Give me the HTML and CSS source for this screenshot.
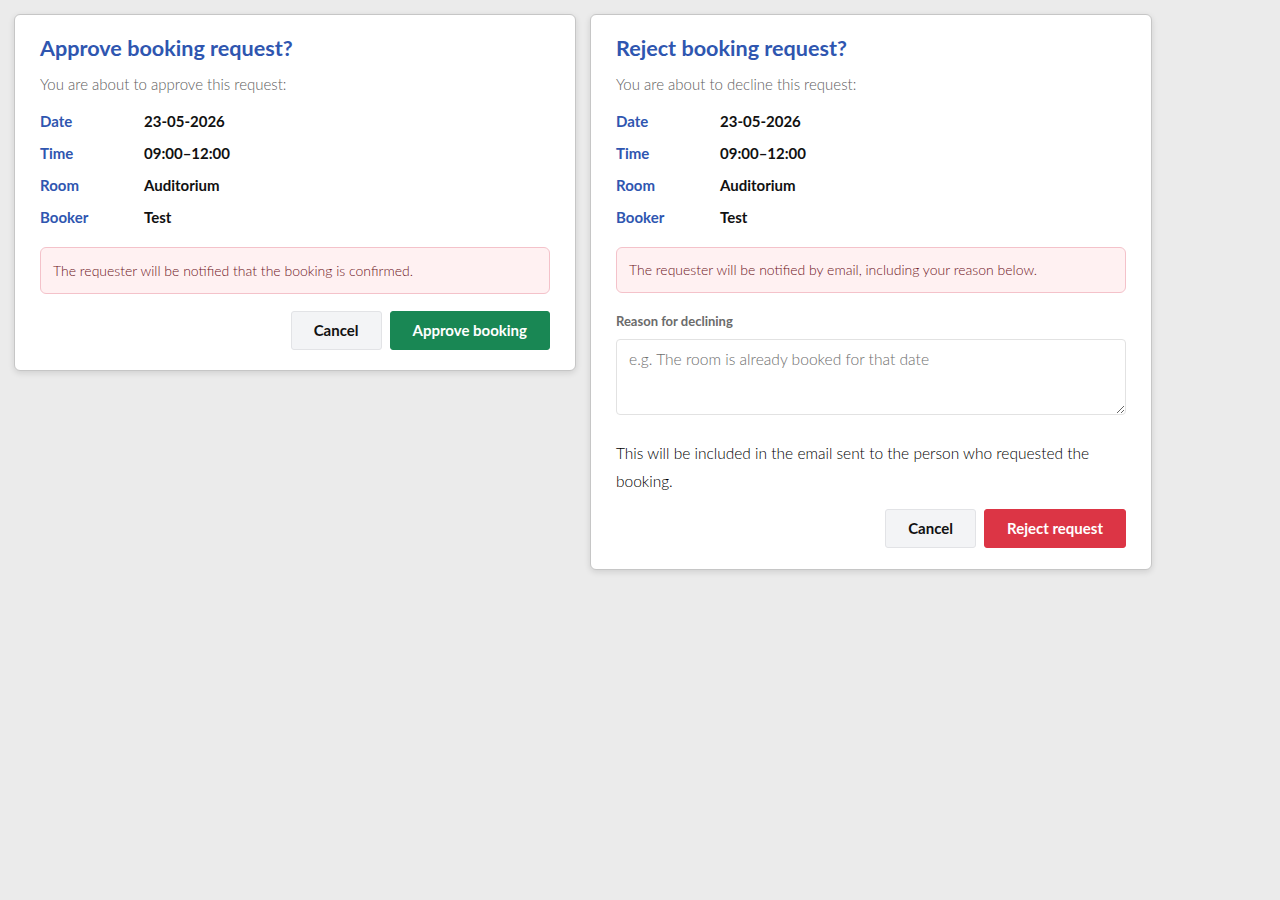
FILE: index.html
```html
<!DOCTYPE html>
<html lang="en">
<head>
<meta charset="utf-8">
<title>Booking requests</title>
<link rel="stylesheet" href="styles.css">
</head>
<body>
<main class="page">
  <section class="card">
    <h2 class="card-title">Approve booking request?</h2>
    <p class="card-sub">You are about to approve this request:</p>
    <dl class="details">
      <div class="row"><dt>Date</dt><dd>23-05-2026</dd></div>
      <div class="row"><dt>Time</dt><dd>09:00–12:00</dd></div>
      <div class="row"><dt>Room</dt><dd>Auditorium</dd></div>
      <div class="row"><dt>Booker</dt><dd>Test</dd></div>
    </dl>
    <div class="notice">The requester will be notified that the booking is confirmed.</div>
    <div class="actions">
      <button class="btn btn-cancel" type="button">Cancel</button>
      <button class="btn btn-approve" type="button">Approve booking</button>
    </div>
  </section>

  <section class="card card-reject">
    <h2 class="card-title">Reject booking request?</h2>
    <p class="card-sub">You are about to decline this request:</p>
    <dl class="details">
      <div class="row"><dt>Date</dt><dd>23-05-2026</dd></div>
      <div class="row"><dt>Time</dt><dd>09:00–12:00</dd></div>
      <div class="row"><dt>Room</dt><dd>Auditorium</dd></div>
      <div class="row"><dt>Booker</dt><dd>Test</dd></div>
    </dl>
    <div class="notice notice-slim">The requester will be notified by email, including your reason below.</div>
    <label class="field-label" for="reason">Reason for declining</label>
    <textarea id="reason" class="reason" placeholder="e.g. The room is already booked for that date"></textarea>
    <p class="help">This will be included in the email sent to the person who requested the booking.</p>
    <div class="actions actions-tight">
      <button class="btn btn-cancel" type="button">Cancel</button>
      <button class="btn btn-reject" type="button">Reject request</button>
    </div>
  </section>
</main>
</body>
</html>
```

FILE: styles.css
```css
html, body {
  margin: 0;
  padding: 0;
  background: #ebebeb;
  font-family: Lato, "Open Sans", "Liberation Sans", sans-serif;
  color: #111;
}

.page {
  display: flex;
  align-items: flex-start;
  gap: 14px;
  padding: 14px;
}

.card {
  box-sizing: border-box;
  width: 562px;
  background: #fff;
  border: 1px solid #c6c6c6;
  border-radius: 6px;
  box-shadow: 0 2px 6px rgba(0, 0, 0, 0.12);
  padding: 19px 25px 20px 25px;
  display: flex;
  flex-direction: column;
}

.card-reject {
  padding-bottom: 21px;
}

.card-title {
  margin: 0;
  font-size: 21.6px;
  line-height: 28px;
  font-weight: 700;
  color: #2f56b0;
}

.card-sub {
  margin: 12px 0 0;
  font-size: 15px;
  line-height: 20px;
  font-weight: 300;
  color: #5e5e5e;
}

.details {
  margin: 11px 0 0;
}

.row {
  display: flex;
  height: 32px;
  align-items: center;
  font-size: 15px;
  font-weight: 700;
}

.row dt {
  width: 104px;
  color: #2f56b0;
}

.row dd {
  margin: 0;
  color: #111;
}

.notice {
  margin-top: 14px;
  background: #fff1f2;
  border: 1px solid #f4c2ca;
  border-radius: 6px;
  padding: 13px 12px;
  font-size: 14px;
  line-height: 19px;
  font-weight: 300;
  color: #6e1524;
}

.notice-slim {
  padding: 12px 12px 13px;
}

.actions {
  display: flex;
  justify-content: flex-end;
  gap: 8px;
  margin-top: 17px;
}

.actions-tight {
  margin-top: 14px;
}

.btn {
  font-family: inherit;
  font-size: 15px;
  line-height: 17px;
  font-weight: 700;
  padding: 10px 22px;
  border-radius: 3px;
  border: 1px solid transparent;
  cursor: pointer;
}

.btn-cancel {
  background: #f3f4f6;
  border-color: #e2e3e6;
  color: #111;
}

.btn-approve {
  background: #198754;
  border-color: #198754;
  color: #fff;
}

.btn-reject {
  background: #dc3545;
  border-color: #dc3545;
  color: #fff;
}

.field-label {
  display: block;
  margin-top: 19px;
  font-size: 13px;
  line-height: 18px;
  font-weight: 700;
  color: #6b6b6b;
}

.reason {
  box-sizing: border-box;
  display: block;
  width: 100%;
  height: 76px;
  margin-top: 9px;
  padding: 9px 12px;
  border: 1px solid #e2e2e2;
  border-radius: 4px;
  font-family: inherit;
  font-size: 15.6px;
  line-height: 20px;
  font-weight: 300;
  color: #111;
  resize: vertical;
}

.reason::placeholder {
  color: #6e6e6e;
  font-weight: 300;
}

.help {
  margin: 24px 0 0;
  font-size: 15.5px;
  line-height: 28px;
  font-weight: 300;
  color: #000;
}
```
